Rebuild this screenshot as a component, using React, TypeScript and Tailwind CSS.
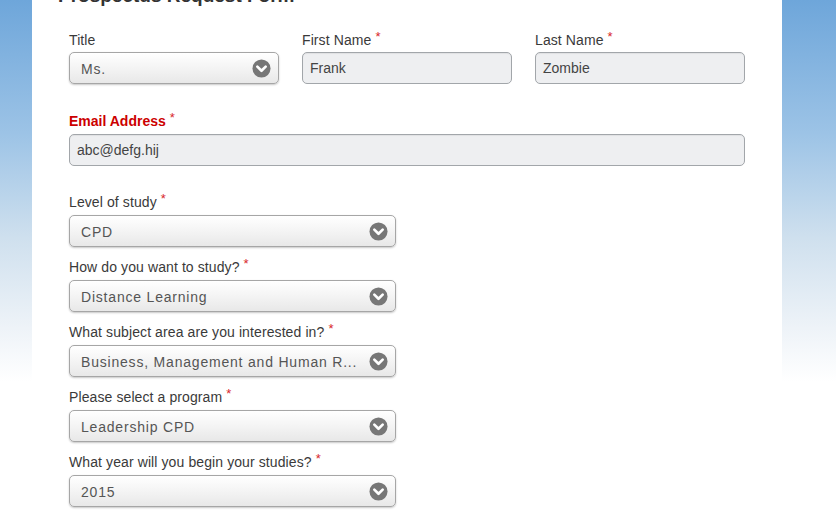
export default function App() {
  const selects = [
    { label: "Level of study", value: "CPD" },
    { label: "How do you want to study?", value: "Distance Learning" },
    { label: "What subject area are you interested in?", value: "Business, Management and Human R..." },
    { label: "Please select a program", value: "Leadership CPD" },
    { label: "What year will you begin your studies?", value: "2015" },
  ];

  return (
    <div className="w-[836px] h-[530px] overflow-hidden bg-[linear-gradient(180deg,#6ea6da_0%,#9cc3e6_25%,#cfe0ee_45%,#eef3f8_62%,#ffffff_72%,#ffffff_100%)] font-['Liberation_Sans',Arial,sans-serif]">
      <div className="ml-[32px] w-[750px] h-full bg-white pl-[37px]">
        <h1 className="-mt-[16px] -ml-[11px] h-[24px] text-[19px] leading-[24px] font-bold text-[#333]">
          Prospectus Request Form
        </h1>

        {/* name row */}
        <div className="mt-[22px] grid w-[676px] grid-cols-3 gap-x-[23px]">
          <div>
            <Label text="Title" />
            <SelectBox value="Ms." />
          </div>
          <div>
            <Label text="First Name" required />
            <TextBox value="Frank" className="mt-px" />
          </div>
          <div>
            <Label text="Last Name" required />
            <TextBox value="Zombie" className="mt-px" />
          </div>
        </div>

        <div className="mt-[27px] w-[676px]">
          <div className="h-[20px] mb-[3px] text-[14px] leading-[20px] font-bold text-[#cc0000]">
            Email Address<Star />
          </div>
          <TextBox value="abc@defg.hij" />
        </div>

        <div className="mt-[26px] flex w-[327px] flex-col gap-[10px]">
          {selects.map((s) => (
            <div key={s.label}>
              <div className="mb-[3px]">
                <Label text={s.label} required />
              </div>
              <SelectBox value={s.value} />
            </div>
          ))}
        </div>
      </div>
    </div>
  );
}

function Star() {
  return <span className="relative -top-[4px] ml-[4px] text-[13px] font-normal text-[#d8262b]">*</span>;
}

function Label({ text, required }: { text: string; required?: boolean }) {
  return (
    <div className="h-[20px] mb-[2px] text-[14px] tracking-[0.1px] leading-[20px] text-[#3a3a3a] whitespace-nowrap">
      {text}
      {required && <Star />}
    </div>
  );
}

function TextBox({ value, className = "" }: { value: string; className?: string }) {
  return (
    <div
      className={`h-[32px] rounded-[5px] border border-[#a2a6aa] bg-[#eeeff1] pl-[7px] text-[14px] leading-[31px] text-[#444] shadow-[inset_0_1px_1px_rgba(0,0,0,0.06)] ${className}`}
    >
      {value}
    </div>
  );
}

function SelectBox({ value }: { value: string }) {
  return (
    <div className="flex h-[32px] items-center justify-between rounded-[5px] border border-[#a6a6a6] bg-[linear-gradient(180deg,#ffffff_0%,#f4f4f4_50%,#e8e8e8_100%)] pl-[11px] pr-[7px] shadow-[0_1px_2px_rgba(0,0,0,0.22)]">
      <span className="truncate pt-[2px] text-[14px] tracking-[0.8px] text-[#555]">{value}</span>
      <svg width="19" height="19" viewBox="0 0 20 20" className="shrink-0">
        <circle cx="10" cy="10" r="9.5" fill="#777" />
        <path d="M5.6 8 L10 12.4 L14.4 8" fill="none" stroke="#fff" strokeWidth="2.8" strokeLinecap="round" strokeLinejoin="round" />
      </svg>
    </div>
  );
}
